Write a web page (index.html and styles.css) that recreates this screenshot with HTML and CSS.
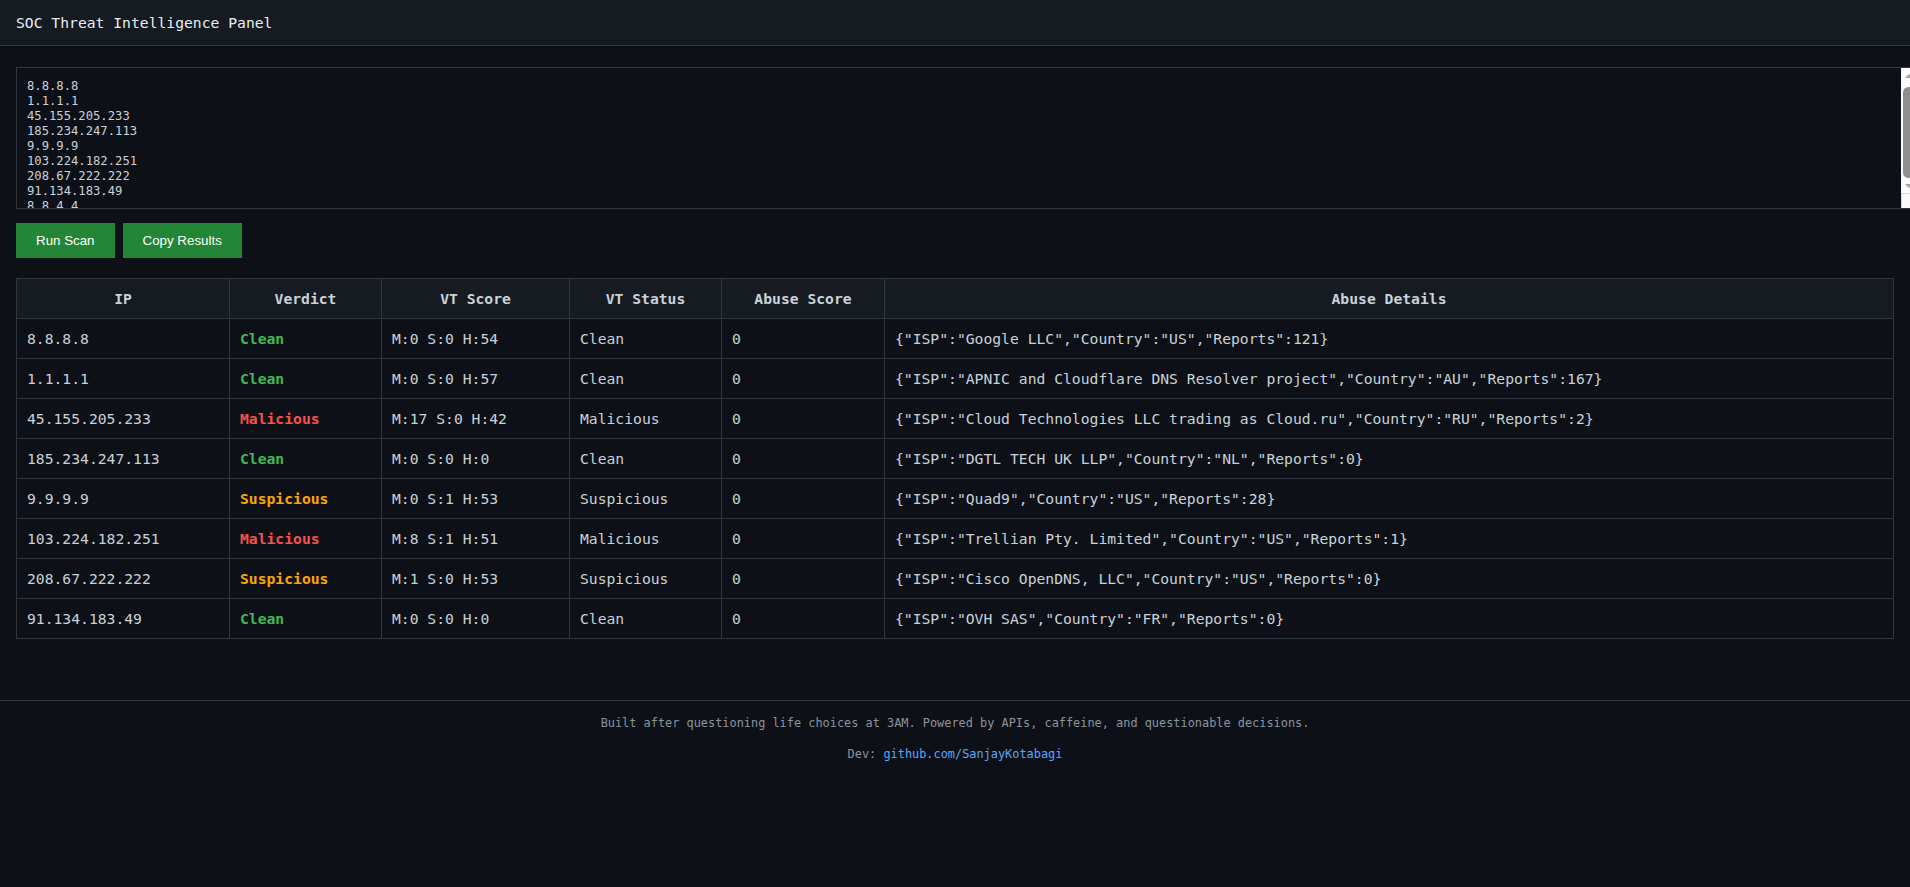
FILE: index.html
```html
<!DOCTYPE html>
<html lang="en">
<head>
  <meta charset="UTF-8">
  <meta name="viewport" content="width=device-width, initial-scale=1">
  <title>SOC Threat Intelligence Panel</title>
  <link rel="stylesheet" href="styles.css">
</head>
<body>
  <header class="topbar">SOC Threat Intelligence Panel</header>

  <main class="panel">
    <div class="input-wrap">
      <textarea id="ipInput" class="ip-input" spellcheck="false">8.8.8.8
1.1.1.1
45.155.205.233
185.234.247.113
9.9.9.9
103.224.182.251
208.67.222.222
91.134.183.49
8.8.4.4
</textarea>
      
      <div class="scrollbar" aria-hidden="true">
        <span class="sb-btn"><span class="sb-arrow up"></span></span>
        <span class="sb-track"><span class="sb-thumb"></span></span>
        <span class="sb-btn"><span class="sb-arrow down"></span></span>
        <span class="sb-corner"></span>
      </div>
    </div>

    <div class="actions">
      <button class="btn" id="runScan">Run Scan</button>
      <button class="btn" id="copyResults">Copy Results</button>
    </div>

    <table class="results">
      <thead>
        <tr>
          <th class="col-ip">IP</th>
          <th class="col-verdict">Verdict</th>
          <th class="col-vt">VT Score</th>
          <th class="col-status">VT Status</th>
          <th class="col-abuse">Abuse Score</th>
          <th>Abuse Details</th>
        </tr>
      </thead>
      <tbody>
        <tr>
          <td>8.8.8.8</td>
          <td class="verdict clean">Clean</td>
          <td>M:0 S:0 H:54</td>
          <td>Clean</td>
          <td>0</td>
          <td>{"ISP":"Google LLC","Country":"US","Reports":121}</td>
        </tr>
        <tr>
          <td>1.1.1.1</td>
          <td class="verdict clean">Clean</td>
          <td>M:0 S:0 H:57</td>
          <td>Clean</td>
          <td>0</td>
          <td>{"ISP":"APNIC and Cloudflare DNS Resolver project","Country":"AU","Reports":167}</td>
        </tr>
        <tr>
          <td>45.155.205.233</td>
          <td class="verdict malicious">Malicious</td>
          <td>M:17 S:0 H:42</td>
          <td>Malicious</td>
          <td>0</td>
          <td>{"ISP":"Cloud Technologies LLC trading as Cloud.ru","Country":"RU","Reports":2}</td>
        </tr>
        <tr>
          <td>185.234.247.113</td>
          <td class="verdict clean">Clean</td>
          <td>M:0 S:0 H:0</td>
          <td>Clean</td>
          <td>0</td>
          <td>{"ISP":"DGTL TECH UK LLP","Country":"NL","Reports":0}</td>
        </tr>
        <tr>
          <td>9.9.9.9</td>
          <td class="verdict suspicious">Suspicious</td>
          <td>M:0 S:1 H:53</td>
          <td>Suspicious</td>
          <td>0</td>
          <td>{"ISP":"Quad9","Country":"US","Reports":28}</td>
        </tr>
        <tr>
          <td>103.224.182.251</td>
          <td class="verdict malicious">Malicious</td>
          <td>M:8 S:1 H:51</td>
          <td>Malicious</td>
          <td>0</td>
          <td>{"ISP":"Trellian Pty. Limited","Country":"US","Reports":1}</td>
        </tr>
        <tr>
          <td>208.67.222.222</td>
          <td class="verdict suspicious">Suspicious</td>
          <td>M:1 S:0 H:53</td>
          <td>Suspicious</td>
          <td>0</td>
          <td>{"ISP":"Cisco OpenDNS, LLC","Country":"US","Reports":0}</td>
        </tr>
        <tr>
          <td>91.134.183.49</td>
          <td class="verdict clean">Clean</td>
          <td>M:0 S:0 H:0</td>
          <td>Clean</td>
          <td>0</td>
          <td>{"ISP":"OVH SAS","Country":"FR","Reports":0}</td>
        </tr>
      </tbody>
    </table>
  </main>

  <footer class="credits">
    <p>Built after questioning life choices at 3AM. Powered by APIs, caffeine, and questionable decisions.</p>
    <p>Dev: <a href="#">github.com/SanjayKotabagi</a></p>
  </footer>
</body>
</html>
```

FILE: styles.css
```css
body {
  margin: 0;
  padding: 0;
  background-color: #0d1117;
  color: #c9d1d9;
  font-family: "DejaVu Sans Mono", "Liberation Mono", monospace;
  overflow-x: hidden; /* textarea runs past the right edge */
}

.topbar {
  padding: 14px 16px 13px;
  background-color: #161b22;
  border-bottom: 1px solid #30363d;
  font-size: 14.7px;
  line-height: 18px;
  color: #e6edf3;
}

.panel {
  padding: 21px 16px 20px;
}

.input-wrap {
  position: relative;
}

.ip-input {
  display: block;
  width: 100%;
  height: 119px;
  margin: 0;
  padding: 11px 10px 10px;
  background-color: #0d1117;
  color: #c9d1d9;
  border: 1px solid #30363d;
  border-radius: 0;
  font-family: "DejaVu Sans Mono", "Liberation Mono", monospace;
  font-size: 12.2px;
  line-height: 15px;
  resize: none;
  outline: none;
  overflow: hidden;
}

/* fake light scrollbar sitting on the textarea's right edge */
.scrollbar {
  position: absolute;
  top: 1px;
  bottom: 1px;
  right: -22px;
  width: 15px;
  display: flex;
  flex-direction: column;
  background-color: #fbfbfb;
}

.sb-btn {
  height: 15px;
  display: flex;
  align-items: center;
  justify-content: center;
}

.sb-arrow {
  width: 0;
  height: 0;
  border-left: 4px solid transparent;
  border-right: 4px solid transparent;
}

.sb-arrow.up { border-bottom: 4px solid #a3a3a3; }
.sb-arrow.down { border-top: 4px solid #a3a3a3; }

.sb-track {
  flex: 1;
  padding: 4px 2px 0;
}

.sb-thumb {
  display: block;
  height: 91px;
  background-color: #8f8f8f;
  border-radius: 6px;
}

.sb-corner {
  height: 14px;
  border-top: 1px solid #dcdcdc;
  border-left: 1px solid #dcdcdc;
  background-color: #fbfbfb;
}

.actions {
  display: flex;
  gap: 8px;
  margin-top: 14px;
}

.btn {
  padding: 10px 20px;
  border: none;
  border-radius: 0;
  background-color: #238636;
  color: white;
  font-family: "Liberation Sans", Arial, sans-serif;
  font-size: 13.33px;
  line-height: 15px;
  cursor: pointer;
}

.results {
  width: 100%;
  margin-top: 20px;
  border-collapse: collapse;
  table-layout: fixed;
  font-size: 14.7px;
}

.results th,
.results td {
  border: 1px solid #30363d;
  padding: 10px;
  height: 19px;
  line-height: 19px;
  text-align: left;
  white-space: nowrap;
  overflow: hidden;
}

.results th {
  background-color: #161b22;
  text-align: center;
  font-weight: bold;
}

.results .col-ip { width: 192px; }
.results .col-verdict { width: 131px; }
.results .col-vt { width: 167px; }
.results .col-status { width: 131px; }
.results .col-abuse { width: 142px; }

.verdict { font-weight: bold; }
.verdict.clean { color: #3fb950; }
.verdict.malicious { color: #f85149; }
.verdict.suspicious { color: #ffa500; }

.credits {
  margin-top: 41px;
  border-top: 1px solid #30363d;
  text-align: center;
  font-size: 11.9px;
  line-height: 18px;
  color: #8b949e;
}

.credits p {
  margin: 13px 0;
}

.credits a {
  color: #58a6ff;
  text-decoration: none;
}
```
